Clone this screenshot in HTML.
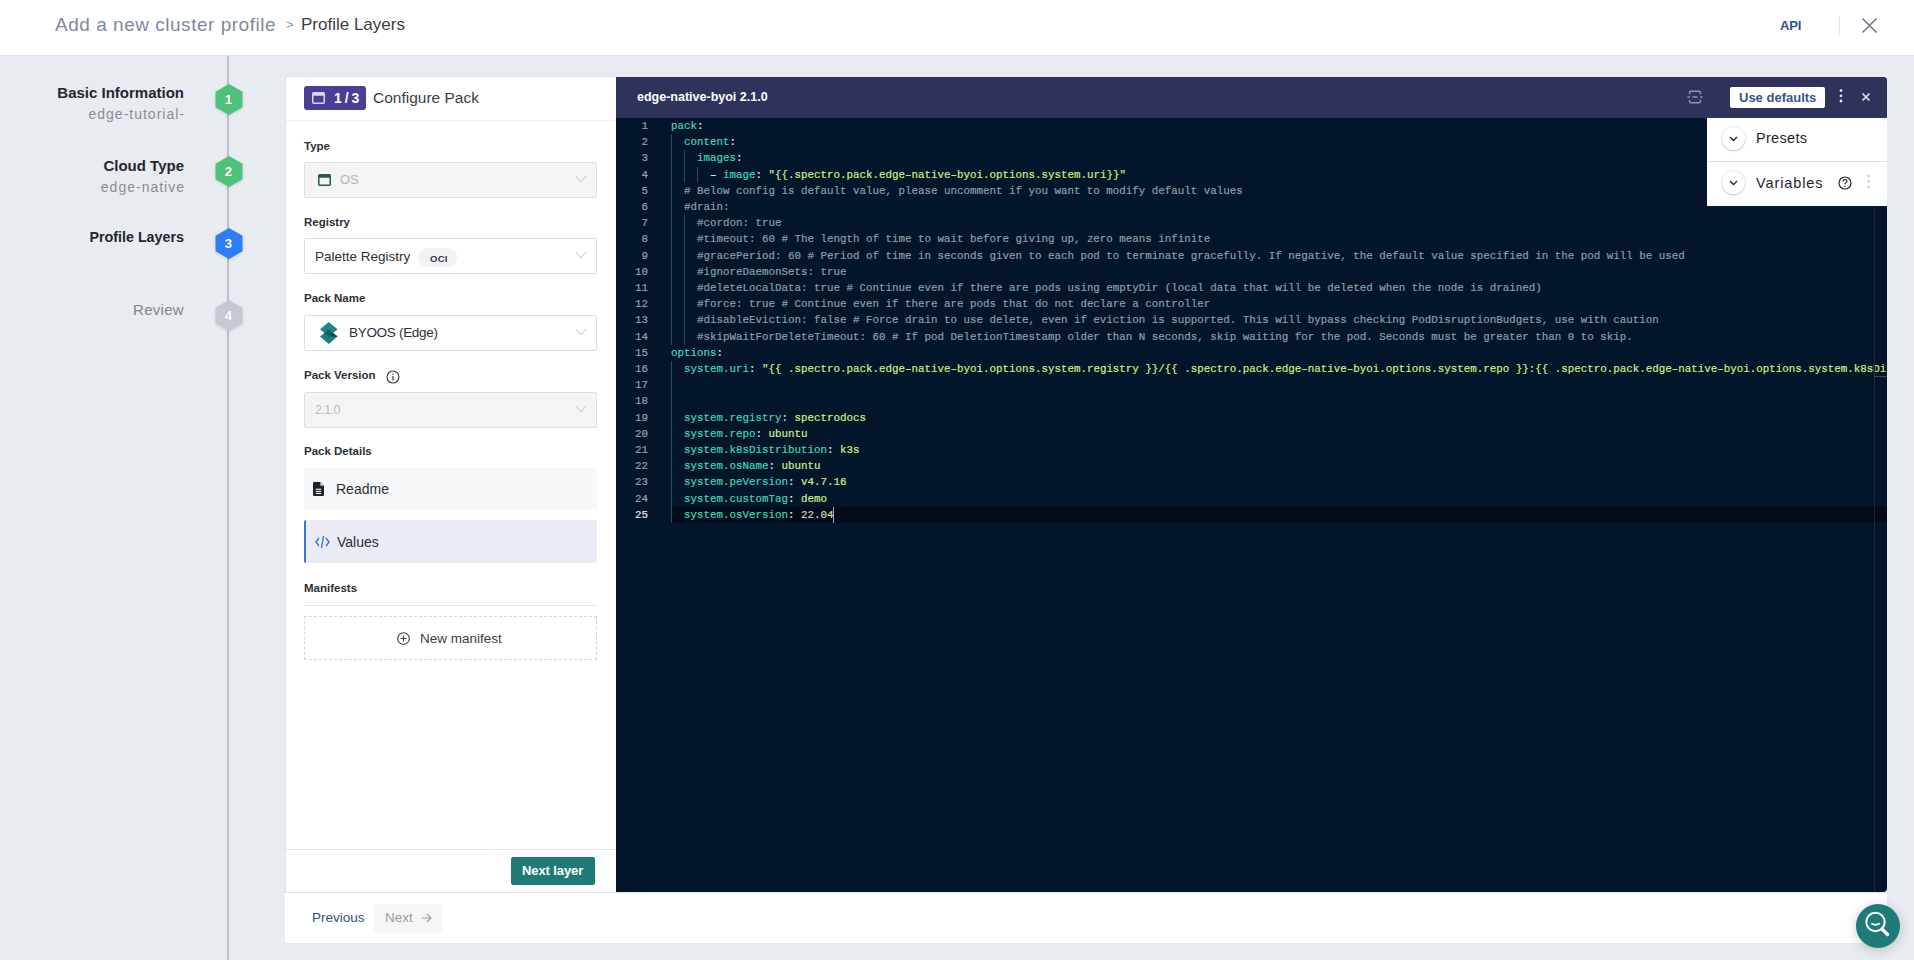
<!DOCTYPE html>
<html><head><meta charset="utf-8">
<style>
*{box-sizing:border-box;margin:0;padding:0}
html,body{width:1914px;height:960px;overflow:hidden}
body{background:#e8ebef;font-family:"Liberation Sans",sans-serif;position:relative;color:#222}
.abs{position:absolute}
#hdr{left:0;top:0;width:1914px;height:56px;background:#fff;border-bottom:1px solid #dcdfe4}
#crumb1{left:55px;top:14px;font-size:19px;color:#7b8aa1;white-space:nowrap;letter-spacing:0.52px}
#crumbsep{left:286px;top:17px;font-size:13px;color:#8a95a5}
#crumb2{left:301px;top:15px;font-size:17px;color:#3a3f47;white-space:nowrap}
#api{left:1780px;top:18px;font-size:13px;color:#2f5189;font-weight:bold;letter-spacing:-0.2px}
#vsep{left:1839px;top:16px;width:1px;height:19px;background:#e3e6ea}
#vline{left:227px;top:56px;width:2px;height:904px;background:#b9c0cc}
.step{position:absolute;text-align:right;white-space:nowrap}
.step .t{font-size:15px;font-weight:bold;color:#23272e}
.step .s{font-size:14px;color:#8a8d93;margin-top:5px;letter-spacing:1px;margin-right:-1px}
.hex{position:absolute;width:28px;height:31px;filter:drop-shadow(0 1px 1.5px rgba(0,0,0,0.12))}
.hex span{position:absolute;left:0;top:0;width:28px;height:31px;text-align:center;line-height:31px;color:#fff;font-size:13.5px;font-weight:bold}
#card{left:285px;top:76px;width:331px;height:817px;background:#fff;border:1px solid #e0e2e6;border-right:none;border-radius:3px 0 0 0}
#edit{left:616px;top:77px;width:1271px;height:815px;background:#02152a;border-radius:0 4px 4px 0;overflow:hidden}
#ehdr{left:0;top:0;width:1271px;height:41px;background:#2f335b}
#bot{left:285px;top:892px;width:1602px;height:51px;background:#fff;border-top:1px solid #e0e2e6}
.lbl{position:absolute;left:18px;font-size:11.5px;font-weight:bold;color:#2b2f36}
.sel{position:absolute;left:18px;width:293px;height:36px;border:1px solid #dcdfe3;border-radius:2px;background:#fff}
.sel.dis{background:#f4f4f4}
.chev{position:absolute;right:9px;top:12px;width:12px;height:8px}
#code{left:0;top:41px;width:1271px;height:774px;overflow:hidden;font-family:"Liberation Mono",monospace;font-size:10.83px}
.ln{position:absolute;left:0;width:32px;text-align:right;line-height:16.2px;height:16.2px;color:#9aa1a6}
.ln.cur{color:#e6e8ea}
.cl{position:absolute;left:55px;line-height:16.2px;height:16.2px;white-space:pre;color:#e8eaec}
.cl .k{color:#40d6b6}.cl .s{color:#cdf083}.cl .c{color:#8e9ea6}.cl .p{color:#e8eaec}.cl .n{color:#d7d9ae}
#code{-webkit-text-stroke:0.2px}
.gd{position:absolute;width:1px;background:#3a4552}
#panel{left:1091px;top:41px;width:180px;height:88px;background:#fff}
.circ{position:absolute;width:23px;height:23px;border-radius:50%;background:#fff;box-shadow:0 1px 2px rgba(0,0,0,0.18),0 0 0 1px #eceef0;display:flex;align-items:center;justify-content:center}
</style></head><body>
<div id="hdr" class="abs"></div>
<div id="crumb1" class="abs">Add a new cluster profile</div>
<div id="crumbsep" class="abs">&gt;</div>
<div id="crumb2" class="abs">Profile Layers</div>
<div id="api" class="abs">API</div>
<div id="vsep" class="abs"></div>
<svg class="abs" style="left:1861px;top:17px" width="17" height="17" viewBox="0 0 17 17"><path d="M1.5 1.5L15.5 15.5M15.5 1.5L1.5 15.5" stroke="#6b7685" stroke-width="1.5" fill="none"/></svg>

<div id="vline" class="abs"></div>

<div class="step" style="right:1730px;top:84px"><div class="t">Basic Information</div><div class="s">edge-tutorial-</div></div>
<div class="step" style="right:1730px;top:157px"><div class="t">Cloud Type</div><div class="s">edge-native</div></div>
<div class="step" style="right:1730px;top:229px"><div class="t" style="font-size:14.3px">Profile Layers</div></div>
<div class="step" style="right:1730px;top:301px"><div class="t" style="color:#80858c;font-weight:normal;letter-spacing:0.3px">Review</div></div>

<div class="hex" style="left:214.5px;top:84px"><svg width="28" height="31" viewBox="0 0 28 31"><polygon points="14,0 27.5,7.7 27.5,23.3 14,31 0.5,23.3 0.5,7.7" fill="#4cc27a"/></svg><span>1</span></div>
<div class="hex" style="left:214.5px;top:156px"><svg width="28" height="31" viewBox="0 0 28 31"><polygon points="14,0 27.5,7.7 27.5,23.3 14,31 0.5,23.3 0.5,7.7" fill="#4cc27a"/></svg><span>2</span></div>
<div class="hex" style="left:214.5px;top:228px"><svg width="28" height="31" viewBox="0 0 28 31"><polygon points="14,0 27.5,7.7 27.5,23.3 14,31 0.5,23.3 0.5,7.7" fill="#2f7df6"/></svg><span>3</span></div>
<div class="hex" style="left:214.5px;top:300px"><svg width="28" height="31" viewBox="0 0 28 31"><polygon points="14,0 27.5,7.7 27.5,23.3 14,31 0.5,23.3 0.5,7.7" fill="#c5c9d1"/></svg><span>4</span></div>

<div id="card" class="abs">
  <div class="abs" style="left:18px;top:9px;width:62px;height:24px;background:#4a3f98;border-radius:3px"></div>
  <svg class="abs" style="left:26px;top:15px" width="13" height="12" viewBox="0 0 13 12"><rect x="0.75" y="0.75" width="11.5" height="10.5" rx="1" fill="none" stroke="#d9d6f0" stroke-width="1.5"/><rect x="0.75" y="0.75" width="11.5" height="3" fill="#d9d6f0"/></svg>
  <div class="abs" style="left:48px;top:13px;font-size:14px;font-weight:bold;color:#fff;white-space:pre;letter-spacing:-0.5px">1 / 3</div>
  <div class="abs" style="left:87px;top:12px;font-size:15.5px;color:#3a3e45">Configure Pack</div>
  <div class="abs" style="left:0;top:43px;width:329px;height:1px;background:#eceef1"></div>

  <div class="lbl" style="top:63px">Type</div>
  <div class="sel dis" style="top:85px">
    <svg class="abs" style="left:13px;top:11px" width="13" height="12" viewBox="0 0 13 12"><rect x="0.75" y="0.75" width="11.5" height="10.5" rx="1" fill="none" stroke="#2a5850" stroke-width="1.5"/><rect x="0.75" y="0.75" width="11.5" height="3" fill="#2a5850"/></svg>
    <div class="abs" style="left:35px;top:9px;font-size:13px;color:#b4b6ba">OS</div>
    <svg class="chev" viewBox="0 0 12 8"><path d="M1 1L6 7L11 1" fill="none" stroke="#c3c6ca" stroke-width="1"/></svg>
  </div>

  <div class="lbl" style="top:139px">Registry</div>
  <div class="sel" style="top:161px">
    <div class="abs" style="left:10px;top:10px;font-size:13.5px;color:#2b2f36">Palette Registry</div>
    <div class="abs" style="left:113px;top:9px;width:39px;height:19px;border-radius:10px;background:#f1f2f4"></div>
    <div class="abs" style="left:125px;top:13.5px;font-size:9.5px;font-weight:bold;color:#37365a;letter-spacing:0.3px">OCI</div>
    <svg class="chev" viewBox="0 0 12 8"><path d="M1 1L6 7L11 1" fill="none" stroke="#c3c6ca" stroke-width="1"/></svg>
  </div>

  <div class="lbl" style="top:215px">Pack Name</div>
  <div class="sel" style="top:238px">
    <svg class="abs" style="left:15px;top:6px" width="18" height="23" viewBox="0 0 18 23"><path d="M8.75 7.5L17.5 14.5L8.75 22L0 14.5Z" fill="#1c7f7c"/><path d="M8.75 0L17.5 7.2L8.75 14.5L0 7.2Z" fill="#218683"/><path d="M4.4 10.9L8.75 7.5L17.5 14.5L8.75 14.5Z" fill="#0f615e"/><path d="M12.5 11.2L17.5 14.5L11 14.5Z" fill="#0a4a48"/></svg>
    <div class="abs" style="left:44px;top:9px;font-size:13.5px;color:#2b2f36;letter-spacing:-0.3px">BYOOS (Edge)</div>
    <svg class="chev" viewBox="0 0 12 8"><path d="M1 1L6 7L11 1" fill="none" stroke="#c3c6ca" stroke-width="1"/></svg>
  </div>

  <div class="lbl" style="top:292px">Pack Version</div>
  <svg class="abs" style="left:100px;top:293px" width="14" height="14" viewBox="0 0 14 14"><circle cx="7" cy="7" r="6" fill="none" stroke="#3a3e45" stroke-width="1.1"/><rect x="6.4" y="6" width="1.2" height="4.5" fill="#3a3e45"/><rect x="6.4" y="3.5" width="1.2" height="1.3" fill="#3a3e45"/></svg>
  <div class="sel dis" style="top:315px">
    <div class="abs" style="left:10px;top:10px;font-size:12.5px;color:#b9bbbf;letter-spacing:-0.6px">2.1.0</div>
    <svg class="chev" viewBox="0 0 12 8"><path d="M1 1L6 7L11 1" fill="none" stroke="#c3c6ca" stroke-width="1"/></svg>
  </div>

  <div class="lbl" style="top:368px">Pack Details</div>
  <div class="abs" style="left:18px;top:391px;width:293px;height:42px;background:#f7f8fa;border-radius:2px">
    <svg class="abs" style="left:9px;top:14px" width="11" height="14" viewBox="0 0 11 14"><path d="M1.2 0H7.3L11 3.7V12.8Q11 14 9.8 14H1.2Q0 14 0 12.8V1.2Q0 0 1.2 0Z" fill="#1f2329"/><path d="M7.3 0V3.7H11Z" fill="#c9ccd1"/><rect x="2.8" y="6.7" width="5.4" height="1.1" fill="#f4f5f7"/><rect x="2.8" y="8.8" width="5.4" height="1.1" fill="#f4f5f7"/><rect x="2.8" y="10.9" width="5.4" height="1.1" fill="#f4f5f7"/></svg>
    <div class="abs" style="left:32px;top:13px;font-size:14px;color:#2b2f36">Readme</div>
  </div>
  <div class="abs" style="left:18px;top:443px;width:293px;height:43px;background:#e9ecf5;border-left:2px solid #3d6fd8;border-radius:2px">
    <svg class="abs" style="left:9px;top:15px" width="15" height="14" viewBox="0 0 15 14"><path d="M4 3L1 7L4 11M11 3L14 7L11 11M8.5 1L6.5 13" fill="none" stroke="#3d6fd8" stroke-width="1.4"/></svg>
    <div class="abs" style="left:31px;top:14px;font-size:14px;color:#2b2f36">Values</div>
  </div>

  <div class="lbl" style="top:505px">Manifests</div>
  <div class="abs" style="left:18px;top:528px;width:293px;height:1px;background:#e4e6ea"></div>
  <div class="abs" style="left:18px;top:539px;width:293px;height:44px;border:1px dashed #d4d7dc"></div>
  <svg class="abs" style="left:111px;top:555px" width="13" height="13" viewBox="0 0 13 13"><circle cx="6.5" cy="6.5" r="5.8" fill="none" stroke="#3a3e45" stroke-width="1.1"/><path d="M6.5 3.5V9.5M3.5 6.5H9.5" stroke="#3a3e45" stroke-width="1.1"/></svg>
  <div class="abs" style="left:134px;top:554px;font-size:13.5px;color:#3a3e45">New manifest</div>

  <div class="abs" style="left:0;top:772px;width:329px;height:1px;background:#e4e6ea"></div>
  <div class="abs" style="left:225px;top:780px;width:84px;height:28px;background:#1f7a78;border-radius:2px"></div>
  <div class="abs" style="left:236px;top:786px;font-size:13px;font-weight:bold;color:#fff;letter-spacing:-0.1px">Next layer</div>
</div>

<div id="edit" class="abs">
  <div id="ehdr" class="abs"></div>
  <div class="abs" style="left:21px;top:13px;font-size:12.5px;font-weight:bold;color:#fff;white-space:nowrap">edge-native-byoi 2.1.0</div>
  <svg class="abs" style="left:1071px;top:13px" width="16" height="14" viewBox="0 0 16 14"><path d="M2.5 4.2V2.8Q2.5 1.2 4.1 1.2H11.9Q13.5 1.2 13.5 2.8V4.2M2.5 9.8V11.2Q2.5 12.8 4.1 12.8H11.9Q13.5 12.8 13.5 11.2V9.8M0.5 7H2.8M5.6 7H10.4M13.2 7H15.5" fill="none" stroke="#9296b4" stroke-width="1.5"/></svg>
  <div class="abs" style="left:1114px;top:10px;width:95px;height:21px;background:#fff;border-radius:2px"></div>
  <div class="abs" style="left:1123px;top:13px;font-size:13px;font-weight:bold;color:#34568c;white-space:nowrap">Use defaults</div>
  <svg class="abs" style="left:1222px;top:11px" width="6" height="16" viewBox="0 0 6 16"><circle cx="3" cy="2.6" r="1.4" fill="#e4e5ee"/><circle cx="3" cy="7.8" r="1.4" fill="#e4e5ee"/><circle cx="3" cy="13" r="1.4" fill="#e4e5ee"/></svg>
  <svg class="abs" style="left:1245px;top:15px" width="10" height="10" viewBox="0 0 10 10"><path d="M1.5 1.5L8.5 8.5M8.5 1.5L1.5 8.5" stroke="#e4e5ee" stroke-width="1.6"/></svg>
  <div class="abs" style="left:55px;top:430px;width:1216px;height:16px;background:#010d1a"></div>
  <div id="code" class="abs">
<div class="ln" style="top:0.0px">1</div>
<div class="cl" style="top:0.0px"><span class="k">pack</span><span class="p">:</span></div>
<div class="ln" style="top:16.2px">2</div>
<div class="cl" style="top:16.2px">  <span class="k">content</span><span class="p">:</span></div>
<div class="ln" style="top:32.4px">3</div>
<div class="cl" style="top:32.4px">    <span class="k">images</span><span class="p">:</span></div>
<div class="ln" style="top:48.6px">4</div>
<div class="cl" style="top:48.6px">      <span class="p">– </span><span class="k">image</span><span class="p">: </span><span class="s">&quot;{{.spectro.pack.edge–native–byoi.options.system.uri}}&quot;</span></div>
<div class="ln" style="top:64.8px">5</div>
<div class="cl" style="top:64.8px">  <span class="c"># Below config is default value, please uncomment if you want to modify default values</span></div>
<div class="ln" style="top:81.0px">6</div>
<div class="cl" style="top:81.0px">  <span class="c">#drain:</span></div>
<div class="ln" style="top:97.2px">7</div>
<div class="cl" style="top:97.2px">    <span class="c">#cordon: true</span></div>
<div class="ln" style="top:113.4px">8</div>
<div class="cl" style="top:113.4px">    <span class="c">#timeout: 60 # The length of time to wait before giving up, zero means infinite</span></div>
<div class="ln" style="top:129.6px">9</div>
<div class="cl" style="top:129.6px">    <span class="c">#gracePeriod: 60 # Period of time in seconds given to each pod to terminate gracefully. If negative, the default value specified in the pod will be used</span></div>
<div class="ln" style="top:145.8px">10</div>
<div class="cl" style="top:145.8px">    <span class="c">#ignoreDaemonSets: true</span></div>
<div class="ln" style="top:162.0px">11</div>
<div class="cl" style="top:162.0px">    <span class="c">#deleteLocalData: true # Continue even if there are pods using emptyDir (local data that will be deleted when the node is drained)</span></div>
<div class="ln" style="top:178.2px">12</div>
<div class="cl" style="top:178.2px">    <span class="c">#force: true # Continue even if there are pods that do not declare a controller</span></div>
<div class="ln" style="top:194.4px">13</div>
<div class="cl" style="top:194.4px">    <span class="c">#disableEviction: false # Force drain to use delete, even if eviction is supported. This will bypass checking PodDisruptionBudgets, use with caution</span></div>
<div class="ln" style="top:210.6px">14</div>
<div class="cl" style="top:210.6px">    <span class="c">#skipWaitForDeleteTimeout: 60 # If pod DeletionTimestamp older than N seconds, skip waiting for the pod. Seconds must be greater than 0 to skip.</span></div>
<div class="ln" style="top:226.8px">15</div>
<div class="cl" style="top:226.8px"><span class="k">options</span><span class="p">:</span></div>
<div class="ln" style="top:243.0px">16</div>
<div class="cl" style="top:243.0px">  <span class="k">system.uri</span><span class="p">: </span><span class="s">&quot;{{ .spectro.pack.edge–native–byoi.options.system.registry }}/{{ .spectro.pack.edge–native–byoi.options.system.repo }}:{{ .spectro.pack.edge–native–byoi.options.system.k8sDistribution }}–{{ .spectro.system.kubernetes.version }}&quot;</span></div>
<div class="ln" style="top:259.2px">17</div>
<div class="cl" style="top:259.2px"></div>
<div class="ln" style="top:275.4px">18</div>
<div class="cl" style="top:275.4px"></div>
<div class="ln" style="top:291.6px">19</div>
<div class="cl" style="top:291.6px">  <span class="k">system.registry</span><span class="p">: </span><span class="s">spectrodocs</span></div>
<div class="ln" style="top:307.8px">20</div>
<div class="cl" style="top:307.8px">  <span class="k">system.repo</span><span class="p">: </span><span class="s">ubuntu</span></div>
<div class="ln" style="top:324.0px">21</div>
<div class="cl" style="top:324.0px">  <span class="k">system.k8sDistribution</span><span class="p">: </span><span class="s">k3s</span></div>
<div class="ln" style="top:340.2px">22</div>
<div class="cl" style="top:340.2px">  <span class="k">system.osName</span><span class="p">: </span><span class="s">ubuntu</span></div>
<div class="ln" style="top:356.4px">23</div>
<div class="cl" style="top:356.4px">  <span class="k">system.peVersion</span><span class="p">: </span><span class="s">v4.7.16</span></div>
<div class="ln" style="top:372.6px">24</div>
<div class="cl" style="top:372.6px">  <span class="k">system.customTag</span><span class="p">: </span><span class="s">demo</span></div>
<div class="ln cur" style="top:388.8px">25</div>
<div class="cl" style="top:388.8px">  <span class="k">system.osVersion</span><span class="p">: </span><span class="n">22.04</span></div>
<div class="gd" style="left:55.0px;top:16.2px;height:210.6px"></div>
<div class="gd" style="left:68.0px;top:32.4px;height:32.4px"></div>
<div class="gd" style="left:81.0px;top:48.6px;height:16.2px"></div>
<div class="gd" style="left:68.0px;top:97.2px;height:129.6px"></div>
<div class="gd" style="left:55.0px;top:243.0px;height:162.0px"></div>
  </div>
  <div class="abs" style="left:217px;top:430px;width:1px;height:16px;background:#8ab0e0"></div>
  <div class="abs" style="left:1258px;top:128px;width:1px;height:687px;background:#1b2a3b"></div>
  <div class="abs" style="left:1258px;top:299px;width:13px;height:1px;background:#3a4a5c"></div>
  <div id="panel" class="abs">
    <div class="abs" style="left:0;top:43px;width:180px;height:1px;background:#dfe1e5"></div>
    <div class="circ" style="left:15px;top:9px"><svg width="9" height="6" viewBox="0 0 9 6"><path d="M1 1L4.5 4.5L8 1" fill="none" stroke="#23272e" stroke-width="1.4"/></svg></div>
    <div class="circ" style="left:15px;top:53px"><svg width="9" height="6" viewBox="0 0 9 6"><path d="M1 1L4.5 4.5L8 1" fill="none" stroke="#23272e" stroke-width="1.4"/></svg></div>
    <div class="abs" style="left:49px;top:12px;font-size:14.5px;color:#1f232a;letter-spacing:0.3px">Presets</div>
    <div class="abs" style="left:49px;top:57px;font-size:14.5px;color:#1f232a;letter-spacing:0.9px">Variables</div>
    <svg class="abs" style="left:131px;top:58px" width="14" height="14" viewBox="0 0 14 14"><circle cx="7" cy="7" r="6" fill="none" stroke="#23272e" stroke-width="1.2"/><path d="M5 5.5Q5 3.6 7 3.6Q9 3.6 9 5.3Q9 6.4 7.6 7Q7 7.3 7 8.3" fill="none" stroke="#23272e" stroke-width="1.2"/><circle cx="7" cy="10.2" r="0.8" fill="#23272e"/></svg>
    <svg class="abs" style="left:159px;top:56px" width="5" height="15" viewBox="0 0 5 15"><circle cx="2.5" cy="2" r="1.3" fill="#c8cacf"/><circle cx="2.5" cy="7.5" r="1.3" fill="#c8cacf"/><circle cx="2.5" cy="13" r="1.3" fill="#c8cacf"/></svg>
  </div>
</div>

<div id="bot" class="abs">
  <div class="abs" style="left:27px;top:17px;font-size:13.5px;color:#2f4f86;white-space:nowrap">Previous</div>
  <div class="abs" style="left:89px;top:11px;width:68px;height:29px;background:#f6f6f7;border-radius:2px"></div>
  <div class="abs" style="left:100px;top:17px;font-size:13.5px;color:#9a9ca1;white-space:nowrap">Next</div>
  <svg class="abs" style="left:136px;top:20px" width="11" height="10" viewBox="0 0 11 10"><path d="M0.5 5H10M5.8 0.8L10 5L5.8 9.2" fill="none" stroke="#9a9ca1" stroke-width="1.2"/></svg>
</div>
<div class="abs" style="left:1855.5px;top:903.5px;width:44px;height:44px;border-radius:50%;background:#1f7a78;box-shadow:0 2px 12px rgba(0,0,0,0.2)"></div>
<svg class="abs" style="left:1863px;top:910px" width="28" height="29" viewBox="0 0 28 29"><circle cx="12.5" cy="12" r="9.2" fill="none" stroke="#fff" stroke-width="2"/><path d="M8.3 13.6Q12.5 16.2 16.7 13.6" fill="none" stroke="#fff" stroke-width="1.8"/><path d="M19 19L24.5 24.5" stroke="#fff" stroke-width="3.2" stroke-linecap="round"/></svg>
</body></html>
